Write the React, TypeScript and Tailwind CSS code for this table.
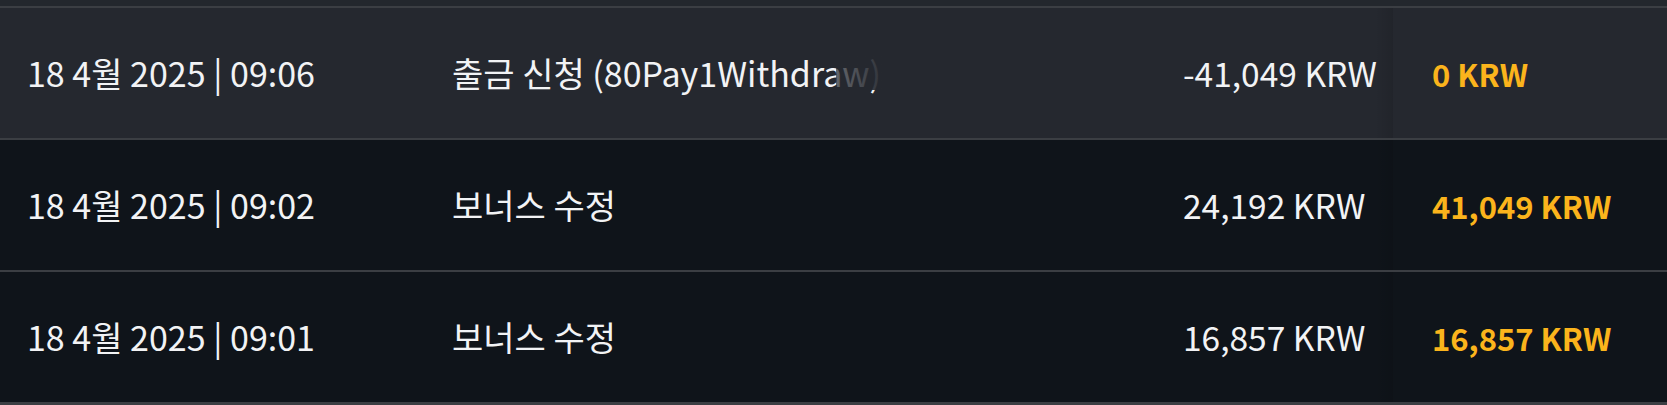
import React from 'react';

interface TxRow {
  date: string;
  title: string;
  amount: string;
  balance: string;
  highlight?: boolean;
}

const rows: TxRow[] = [
  { date: '18 4월 2025 | 09:06', title: '출금 신청 (80Pay1Withdraw)', amount: '-41,049 KRW', balance: '0 KRW', highlight: true },
  { date: '18 4월 2025 | 09:02', title: '보너스 수정', amount: '24,192 KRW', balance: '41,049 KRW' },
  { date: '18 4월 2025 | 09:01', title: '보너스 수정', amount: '16,857 KRW', balance: '16,857 KRW' },
];

const App: React.FC = () => {
  return (
    <div
      className="w-[1667px] h-[405px] overflow-hidden bg-[#0f141a] text-[#f2f3f5]"
      style={{ fontFamily: '"Noto Sans CJK KR", "Noto Sans", sans-serif' }}
    >
      {/* tail of the previous row */}
      <div className="h-[6px] bg-[#23272d]" />

      {rows.map((row, i) => (
        <div
          key={i}
          className={`flex h-[132px] items-center border-t-2 border-[#3b3e43] leading-none ${
            row.highlight ? 'bg-[#25282f]' : 'bg-[#0f141a]'
          }`}
        >
          <div className="w-[452px] shrink-0 pl-[27px] text-[34px] whitespace-nowrap">{row.date}</div>

          <div className="w-[731px] shrink-0">
            <div className="relative w-[432px] whitespace-nowrap text-[34px]">
              <span>{row.title}</span>
              {/* fade for long titles */}
              {row.title.length > 12 && (
                <div
                  className={`absolute inset-y-0 right-0 w-[48px] bg-gradient-to-r ${
                    row.highlight ? 'from-[#25282f]/70 to-[#25282f]/95' : 'from-[#0f141a]/70 to-[#0f141a]/95'
                  }`}
                />
              )}
            </div>
          </div>

          <div className="w-[192px] shrink-0 text-[33.5px] whitespace-nowrap">{row.amount}</div>

          <div className="relative flex h-full flex-1 items-center pl-[57px]">
            <div className="absolute inset-y-0 left-0 w-[18px] bg-gradient-to-r from-transparent to-black/10" />
            <span className="text-[31px] font-bold text-[#fbb41c] whitespace-nowrap">{row.balance}</span>
          </div>
        </div>
      ))}

      <div className="h-[3px] bg-[#3b3e43]" />
    </div>
  );
};

export default App;
